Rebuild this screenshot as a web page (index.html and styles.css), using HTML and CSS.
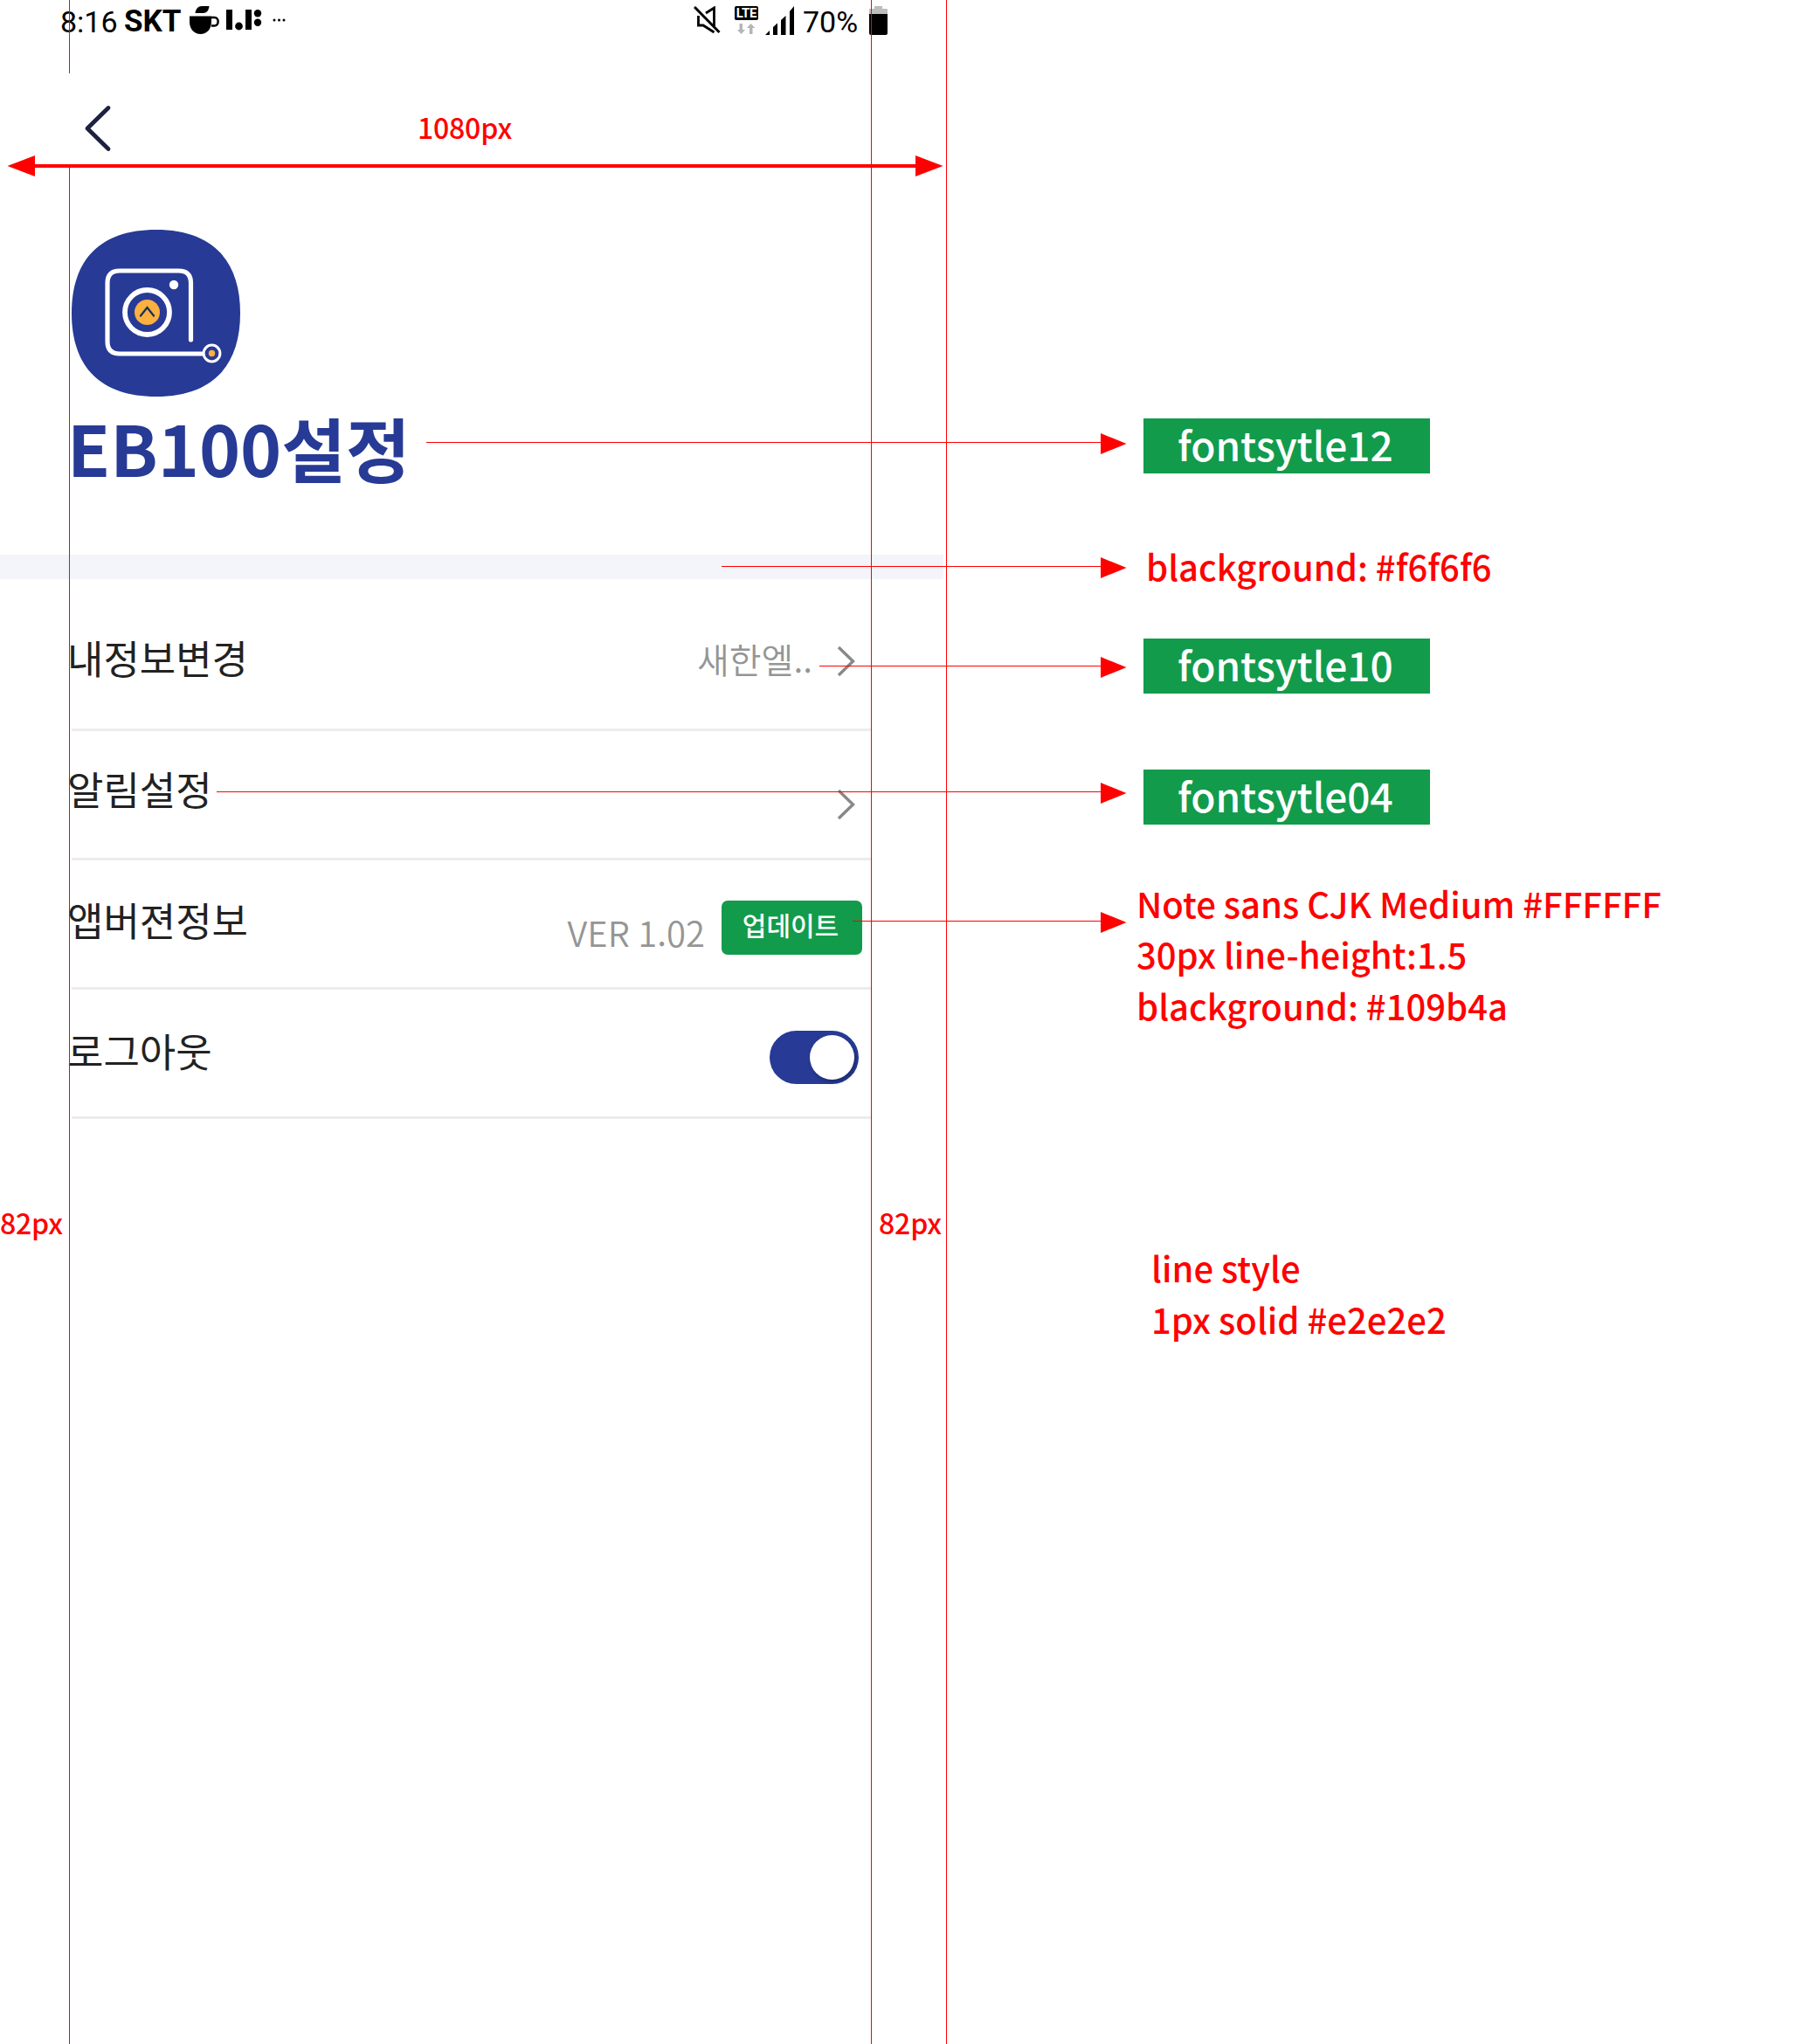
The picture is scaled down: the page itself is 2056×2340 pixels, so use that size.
FILE: index.html
```html
<!DOCTYPE html>
<html lang="ko">
<head>
<meta charset="utf-8">
<title>EB100설정</title>
<link rel="stylesheet" href="styles.css">
</head>
<body>
<div class="sheet">
  <main class="phone">
    <header class="status">
      <div class="status-left">
        <span class="clock">8:16</span>
        <span class="carrier">SKT</span>
        <svg class="cup" width="35" height="34" viewBox="0 0 35 34">
          <path d="M0 12.500H25V19C25 27.500 19.500 33 12.500 33S0 27.500 0 19Z"/>
          <path d="M6.500 9C7 4 10 1 14 1H22.500C22 6 19.500 9 15.500 9Z"/>
          <path d="M25 14H28.500C34 14 34 23.400 28.500 23.400H25" fill="none" stroke="#000" stroke-width="2.500"/>
        </svg>
        <svg class="bars" width="42" height="26" viewBox="0 0 42 26">
          <path d="M0 1H7V24H0ZM22 1H29V24H22Z"/>
          <circle cx="14.500" cy="20" r="4.400"/><circle cx="36" cy="5.200" r="4.200"/><circle cx="36" cy="15.800" r="4.200"/>
        </svg>
        <svg class="dots" width="16" height="4" viewBox="0 0 16 4"><circle cx="2" cy="2" r="1.500"/><circle cx="7.500" cy="2" r="1.500"/><circle cx="13" cy="2" r="1.500"/></svg>
      </div>
      <div class="status-right">
        <svg class="mute" width="32" height="32" viewBox="0 0 32 32">
          <path d="M5.500 11V22H11L23.500 30M14 8L23.500 2V24" fill="none" stroke="#000" stroke-width="2.800"/>
          <path d="M1 1L29.500 30" stroke="#000" stroke-width="3"/>
        </svg>
        <div class="network">
          <span class="lte">LTE</span>
          <svg width="20" height="12" viewBox="0 0 20 12" fill="#b5b5b5"><path d="M2.500 0H6V7H9L4.500 12L0 7H2.500ZM14 12H17.500V5H20.500L15.500 0L11 5H14Z"/></svg>
        </div>
        <svg class="signal" width="34" height="33" viewBox="0 0 34 33"><path d="M0 33L5 28V33ZM9 33V24L14 19.500V33ZM18 33V16L23.500 11V33ZM28 33V6L33 0V33Z"/></svg>
        <span class="percent">70%</span>
        <svg class="battery" width="22" height="33" viewBox="0 0 22 33"><path d="M6 0H15V3H20Q21 3 21 4V9H0V4Q0 3 1 3H6Z" fill="#bdbdbd"/><path d="M0 9H21V31Q21 33 19 33H2Q0 33 0 31Z"/></svg>
      </div>
    </header>

    <nav class="topbar">
      <svg class="back" width="32" height="54" viewBox="0 0 32 54"><path d="M28 3.500L4 27L28 50.500" fill="none" stroke="#1e2140" stroke-width="4.800" stroke-linecap="round" stroke-linejoin="round"/></svg>
      <span class="measure">1080px</span>
    </nav>

    <section class="hero">
      <svg class="logo" width="193" height="191" viewBox="0 0 193 191">
        <path d="M96.500 0C160 0 193 34 193 95.500S160 191 96.500 191S0 157 0 95.500S33 0 96.500 0Z" fill="#273a95"/>
        <g fill="none" stroke="#fff" stroke-linecap="round">
          <path d="M136.500 126V61Q136.500 47 122.500 47H55Q41 47 41 61V128Q41 142 55 142H151" stroke-width="5.200"/>
          <circle cx="86.500" cy="94.500" r="25.500" stroke-width="5.800"/>
          <circle cx="160.500" cy="141.500" r="9.400" stroke-width="3" fill="#273a95"/>
        </g>
        <circle cx="117" cy="63" r="5.200" fill="#fff"/>
        <circle cx="86.500" cy="94.500" r="14.500" fill="#fbb040"/>
        <circle cx="160.500" cy="141.500" r="3.700" fill="#fbb040"/>
        <path d="M79 98.500L86.500 89L94 98.500" fill="none" stroke="#12345a" stroke-width="2.300" stroke-linecap="round"/>
      </svg>
      <h1 class="title">EB100설정</h1>
    </section>
    <div class="band"></div>

    <ul class="list">
      <li class="row profile">
        <span class="label">내정보변경</span>
        <span class="value user">새한엘..</span>
        <svg class="chevron" width="22" height="36" viewBox="0 0 22 36"><path d="M2 2L18.500 18L2 34"/></svg>
      </li>
      <li class="row alerts">
        <span class="label">알림설정</span>
        <svg class="chevron" width="22" height="36" viewBox="0 0 22 36"><path d="M2 2L18.500 18L2 34"/></svg>
      </li>
      <li class="row version">
        <span class="label">앱버젼정보</span>
        <span class="value ver">VER 1.02</span>
        <button class="update">업데이트</button>
      </li>
      <li class="row logout">
        <span class="label">로그아웃</span>
        <span class="toggle"><span class="knob"></span></span>
      </li>
    </ul>
    <div class="margins"><span>82px</span><span>82px</span></div>
  </main>

  <aside class="notes" lang="en">
    <span class="tag">fontsytle12</span>
    <p class="note band-note">blackground: #f6f6f6</p>
    <span class="tag tag-10">fontsytle10</span>
    <span class="tag tag-04">fontsytle04</span>
    <p class="note update-note">Note sans CJK Medium #FFFFFF<br>30px line-height:1.5<br>blackground: #109b4a</p>
    <p class="note line-note">line style<br>1px solid #e2e2e2</p>
  </aside>

  <svg class="guides" width="2056" height="2340" viewBox="0 0 2056 2340">
    <g shape-rendering="crispEdges">
      <path d="M79 0H80V84H79ZM79 190H80V2340H79ZM997 0H998V2340H997ZM1083 0H1084V2340H1083Z"/>
      <path d="M40 188H1048V192H40Z"/>
      <path d="M488 506H1260V507H488ZM826 648H1260V649H826ZM938 762H1260V763H938ZM248 906H1260V907H248ZM976 1054H1260V1055H976Z"/>
    </g>
    <path d="M8.500 190L40 178V202ZM1079.500 190L1048 178V202Z"/>
    <path d="M1260 496L1289.500 508L1260 520ZM1260 638L1289.500 650L1260 662ZM1260 752L1289.500 764L1260 776ZM1260 896L1289.500 908L1260 920ZM1260 1044L1289.500 1056L1260 1068Z"/>
  </svg>
</div>
</body>
</html>
```
FILE: styles.css
```css
* { box-sizing: border-box; }
body {
  margin: 0;
  background: #fff;
  font-family: "Noto Sans CJK KR", sans-serif;
}
svg { display: block; flex: none; }
span, h1 { white-space: nowrap; }
.sheet {
  position: relative;
  display: flex;
  width: 2056px;
  height: 2340px;
  overflow: hidden;
}
.phone { width: 1084px; flex: none; }

/* status bar */
.status {
  display: flex;
  justify-content: space-between;
  height: 84px;
  padding: 0 67px 0 69px;
  font-family: Roboto, sans-serif;
  font-size: 34px;
  line-height: 50px;
}
.status-left, .status-right { display: flex; align-items: flex-start; }
.clock { width: 73px; }
.carrier { width: 75px; font-weight: 700; font-size: 35px; }
.cup { margin-top: 6px; margin-right: 7px; }
.bars { margin-top: 10px; margin-right: 11px; }
.dots { margin-top: 21px; }
.mute { margin-top: 7px; margin-right: 15px; }
.network { width: 27px; margin: 7px 8px 0 0; }
.network svg { margin: 4px 0 0 3px; }
.lte {
  display: block;
  height: 16px;
  border-radius: 2px;
  background: #000;
  color: #fff;
  font: 700 15px/16px Roboto, sans-serif;
  text-align: center;
  letter-spacing: -.3px;
}
.signal { margin-top: 7px; margin-right: 9px; }
.percent { width: 76px; }
.battery { margin-top: 7px; }

/* app header */
.topbar { display: flex; height: 106px; padding-left: 96px; }
.back { margin-top: 36px; }
.measure { margin: 41px 0 0 350px; }
.measure, .margins { color: #f00; font-size: 32px; line-height: 40px; font-weight: 500; letter-spacing: -.2px; }
.hero { height: 445px; padding: 73px 0 0 82px; }
.title {
  margin: -1px 0 0 -5px;
  color: #273a95;
  font-size: 80px;
  line-height: 116px;
  font-weight: 700;
}
.band { width: 1080px; height: 28px; background: #f4f5fa; }

/* settings list */
.list { width: 915px; margin: 0 0 0 82px; padding: 0; list-style: none; }
.row {
  display: flex;
  align-items: flex-start;
  height: 148px;
  border-bottom: 3px solid #ececec;
}
.profile { height: 174px; }
.label {
  margin: 36px auto 0 -5px;
  color: #222;
  font-size: 45px;
  line-height: 60px;
}
.profile .label { margin-top: 60px; }
.version .label { margin-top: 38px; }
.logout .label { margin-top: 40px; }
.value { color: #959595; font-size: 40px; line-height: 60px; font-weight: 350; word-spacing: -1.600px; }
.user { margin: 61px 28px 0 0; }
.ver { margin: 52px 19px 0 0; }
.chevron { margin: 66px 17px 0 0; fill: none; stroke: #888; stroke-width: 3.400px; }
.profile .chevron { margin-top: 76px; }
.update {
  width: 161px;
  height: 62px;
  margin: 46px 10px 0 0;
  padding: 0 3px 8px 0;
  border: 0;
  border-radius: 7px;
  background: #129b4b;
  color: #fff;
  font: 500 30px/54px "Noto Sans CJK KR", sans-serif;
}
.toggle {
  display: flex;
  justify-content: flex-end;
  width: 102px;
  height: 61px;
  margin: 47px 14px 0 0;
  padding: 5px;
  border-radius: 31px;
  background: #273a95;
}
.knob { width: 51px; height: 51px; border-radius: 50%; background: #fff; box-shadow: 2px 3px 4px rgba(0, 0, 0, .25); }
.margins { display: flex; justify-content: space-between; padding: 98px 6px 0 0; }

/* annotations */
.notes {
  display: flex;
  flex-direction: column;
  align-items: flex-start;
  padding: 479px 0 0 225px;
  font-family: "Noto Sans CJK JP", sans-serif;
}
.tag {
  width: 328px;
  height: 63px;
  padding-left: 39px;
  background: #129b4b;
  color: #fff;
  font-size: 46px;
  line-height: 59px;
  font-weight: 500;
  letter-spacing: -.1px;
}
.note {
  margin: 0;
  color: #f00;
  font-size: 40px;
  line-height: 58.400px;
  font-weight: 500;
  white-space: nowrap;
}
.band-note { margin: 77px 0 0 3px; }
.tag-10 { margin-top: 53.600px; }
.tag-04 { margin-top: 87px; }
.update-note { margin: 60.700px 0 0 -8px; }
.line-note { margin: 242.500px 0 0 9px; }
.guides { position: absolute; left: 0; top: 0; fill: #f00; pointer-events: none; }
```
